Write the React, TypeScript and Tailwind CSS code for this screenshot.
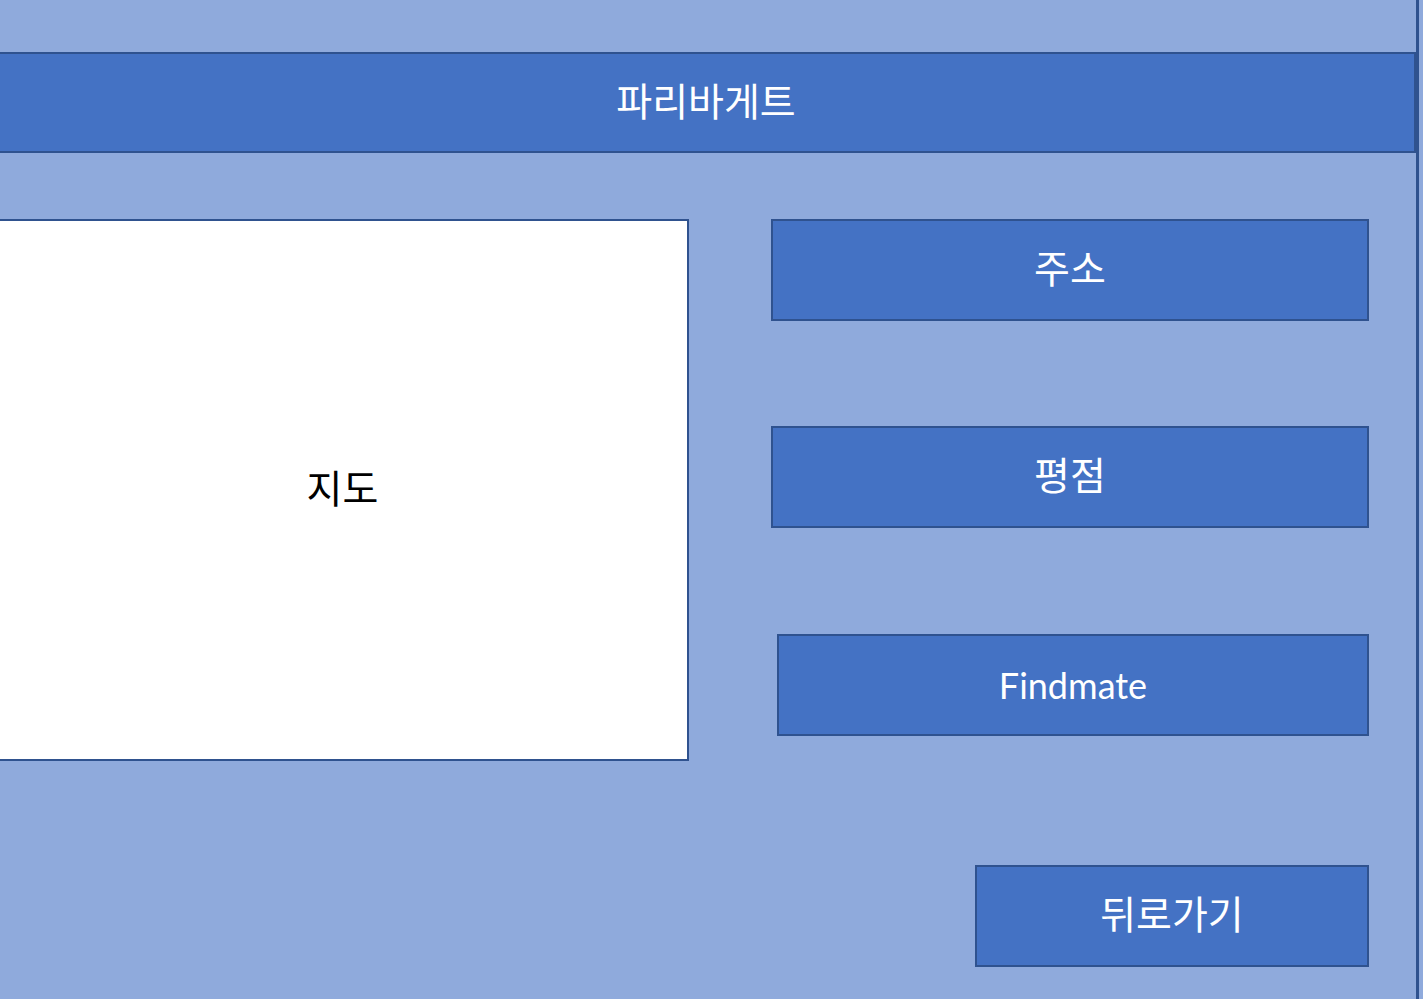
const KR = "font-['Noto_Sans_CJK_KR','Noto_Sans',sans-serif] text-[39px] pb-[7px]";

function Box({
  label,
  className,
  latin,
}: {
  label: string;
  className: string;
  latin?: boolean;
}) {
  return (
    <div
      className={`flex items-center justify-center border-2 border-[#2F528F] bg-[#4472C4] text-white ${
        latin ? "font-['Lato',sans-serif] text-[36px]" : KR
      } ${className}`}
    >
      {label}
    </div>
  );
}

export default function App() {
  return (
    <div className="flex h-[999px] w-[1423px] overflow-hidden bg-[#8FAADC]">
      <div className="flex h-full w-[1416px] shrink-0 flex-col pt-[52px]">
        {/* title bar */}
        <div
          className={`-ml-[4px] flex h-[101px] w-[1420px] shrink-0 items-center justify-center border-2 border-[#2F528F] bg-[#4472C4] text-white ${KR}`}
        >
          파리바게트
        </div>

        <div className="mt-[66px] flex">
          {/* map */}
          <div
            className={`-ml-[4px] flex h-[542px] w-[693px] shrink-0 items-center justify-center border-2 border-[#2F528F] bg-white text-black ${KR}`}
          >
            지도
          </div>

          <div className="ml-[82px] flex w-[598px] shrink-0 flex-col items-end">
            <Box label="주소" className="h-[102px] w-[598px]" />
            <Box label="평점" className="mt-[105px] h-[102px] w-[598px]" />
            <Box label="Findmate" latin className="mt-[106px] h-[102px] w-[592px]" />
            <Box label="뒤로가기" className="mt-[129px] h-[102px] w-[394px]" />
          </div>
        </div>
      </div>
      <div className="h-full w-[3px] shrink-0 bg-[#2F528F]" />
    </div>
  );
}
